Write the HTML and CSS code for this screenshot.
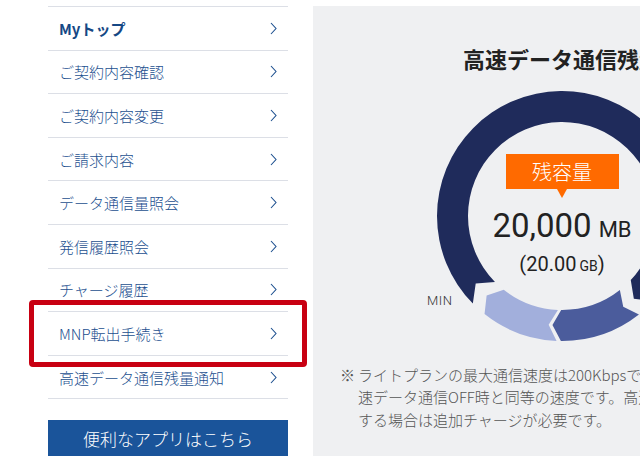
FILE: index.html
```html
<!DOCTYPE html>
<html lang="ja">
<head>
<meta charset="utf-8">
<title>Myページ</title>
<link rel="stylesheet" href="styles.css">
</head>
<body>
<div class="page">
  <aside class="side">
    <ul class="menu">
      <li class="menu-item"><a class="menu-link is-top" href="#"><span>Myトップ</span><svg class="chev" viewBox="0 0 7 13"><polyline points="1,1 6,6.5 1,12"/></svg></a></li>
      <li class="menu-item"><a class="menu-link" href="#"><span>ご契約内容確認</span><svg class="chev" viewBox="0 0 7 13"><polyline points="1,1 6,6.5 1,12"/></svg></a></li>
      <li class="menu-item"><a class="menu-link" href="#"><span>ご契約内容変更</span><svg class="chev" viewBox="0 0 7 13"><polyline points="1,1 6,6.5 1,12"/></svg></a></li>
      <li class="menu-item"><a class="menu-link" href="#"><span>ご請求内容</span><svg class="chev" viewBox="0 0 7 13"><polyline points="1,1 6,6.5 1,12"/></svg></a></li>
      <li class="menu-item"><a class="menu-link" href="#"><span>データ通信量照会</span><svg class="chev" viewBox="0 0 7 13"><polyline points="1,1 6,6.5 1,12"/></svg></a></li>
      <li class="menu-item"><a class="menu-link" href="#"><span>発信履歴照会</span><svg class="chev" viewBox="0 0 7 13"><polyline points="1,1 6,6.5 1,12"/></svg></a></li>
      <li class="menu-item"><a class="menu-link" href="#"><span>チャージ履歴</span><svg class="chev" viewBox="0 0 7 13"><polyline points="1,1 6,6.5 1,12"/></svg></a></li>
      <li class="menu-item"><a class="menu-link" href="#"><span>MNP転出手続き</span><svg class="chev" viewBox="0 0 7 13"><polyline points="1,1 6,6.5 1,12"/></svg></a><span class="highlight"></span></li>
      <li class="menu-item"><a class="menu-link" href="#"><span>高速データ通信残量通知</span><svg class="chev" viewBox="0 0 7 13"><polyline points="1,1 6,6.5 1,12"/></svg></a></li>
    </ul>
    <a class="app-btn" href="#">便利なアプリはこちら</a>
  </aside>
  <main class="panel">
    <h2 class="title">高速データ通信残量</h2>
    <div class="gauge">
      <svg class="gauge-ring" viewBox="0 0 260 260">
        <path class="seg-dark" d="M40.84 217.61 A125 125 0 1 1 221.42 215.25 L201.84 212.64 L198.75 194.11 A94 94 0 1 0 62.95 195.89 L43.71 197.41 Z"/>
        <path class="seg-mid" d="M206.96 228.50 A125 125 0 0 1 128.91 255.00 L120.46 239.08 L129.18 224.00 A94 94 0 0 0 187.87 204.07 L191.23 220.78 Z"/>
        <path class="seg-light" d="M124.55 254.88 A125 125 0 0 1 52.54 228.11 L54.63 209.43 L71.75 203.78 A94 94 0 0 0 125.90 223.91 L116.66 238.68 Z"/>
      </svg>
      <span class="min">MIN</span>
      <div class="gauge-info">
        <div class="badge">残容量</div>
        <div class="amount">20,000<span class="unit">MB</span></div>
        <div class="amount-gb">(20.00<span class="unit-sm">GB</span>)</div>
      </div>
    </div>
    <p class="note"><span class="note-mark">※</span><span class="note-text">ライトプランの最大通信速度は200Kbpsで、高<br>速データ通信OFF時と同等の速度です。高速データ通信を<br>する場合は追加チャージが必要です。</span></p>
  </main>
</div>
</body>
</html>
```

FILE: styles.css
```css
* { box-sizing: border-box; }

html, body {
  margin: 0;
  padding: 0;
  overflow: hidden;
  background: #fff;
}

body {
  font-family: "Noto Sans CJK JP", "Noto Sans", sans-serif;
}

.page {
  display: flex;
  align-items: flex-start;
  width: 1000px;
}

.side {
  flex: 0 0 313px;
  padding: 6px 25px 0 48px;
}

.menu {
  list-style: none;
  margin: 0;
  padding: 0;
  border-top: 1px solid #dcdfe6;
}

.menu-item {
  position: relative;
  border-bottom: 1px solid #dcdfe6;
}

.menu-link {
  display: flex;
  align-items: center;
  justify-content: space-between;
  height: 42.6px;
  padding: 0 11px;
  color: #1c4f8f;
  text-decoration: none;
  font-size: 15px;
  font-weight: 300;
}

.menu-link.is-top {
  font-weight: 700;
  color: #154885;
}

.chev {
  width: 7px;
  height: 13px;
  fill: none;
  stroke: #1c4f8f;
  stroke-width: 1.1;
}

.highlight {
  position: absolute;
  top: -12px;
  bottom: -12px;
  left: -19px;
  right: -19px;
  border: 5px solid #c80012;
  border-radius: 4px;
  pointer-events: none;
}

.app-btn {
  display: block;
  margin-top: 20.6px;
  height: 38px;
  background: #1a549a;
  color: #fff;
  font-size: 17px;
  font-weight: 300;
  line-height: 38px;
  text-align: center;
  text-decoration: none;
}

.panel {
  flex: 0 0 498px;
  margin-top: 6px;
  min-height: 450px;
  background: #eff0f2;
  padding: 37px 27px 0;
}

.title {
  margin: 0;
  text-align: center;
  font-size: 22px;
  font-weight: 700;
  line-height: 30px;
  color: #222;
}

.gauge {
  position: relative;
  width: 300px;
  height: 260px;
  margin: 13px auto 0;
}

.gauge-ring {
  position: absolute;
  left: 20px;
  top: 0;
  width: 260px;
  height: 260px;
}

.seg-dark { fill: #1f2b5b; }
.seg-mid { fill: #4b5c9c; }
.seg-light { fill: #a2afdc; }

.gauge-info {
  position: relative;
  display: flex;
  flex-direction: column;
  align-items: center;
  padding-top: 68px;
}

.badge {
  position: relative;
  width: 113px;
  height: 35px;
  background: #ff6a00;
  color: #fff;
  font-size: 20px;
  font-weight: 300;
  line-height: 35px;
  text-align: center;
}

.badge::after {
  content: "";
  position: absolute;
  left: 50%;
  bottom: -9px;
  margin-left: -5px;
  border-left: 5px solid transparent;
  border-right: 5px solid transparent;
  border-top: 9px solid #ff6a00;
}

.amount {
  margin-top: 17.7px;
  font-family: Roboto, sans-serif;
  font-size: 33px;
  line-height: 38px;
  color: #222;
  white-space: nowrap;
}

.unit {
  font-size: 22px;
  margin-left: 7px;
}

.amount-gb {
  margin-top: 3.5px;
  font-family: Roboto, sans-serif;
  font-size: 20px;
  line-height: 24px;
  color: #222;
  white-space: nowrap;
}

.unit-sm {
  font-size: 14px;
  margin-left: 3px;
}

.min {
  position: absolute;
  left: 15px;
  top: 207px;
  font-family: Roboto, sans-serif;
  font-size: 13px;
  font-weight: 300;
  line-height: 16px;
  letter-spacing: 0.5px;
  color: #333;
}

.note {
  display: flex;
  margin: 17.75px 0 0;
  font-size: 15px;
  font-weight: 300;
  line-height: 22.5px;
  color: #555;
  white-space: nowrap;
}

.note-mark {
  flex: 0 0 18px;
}
```
